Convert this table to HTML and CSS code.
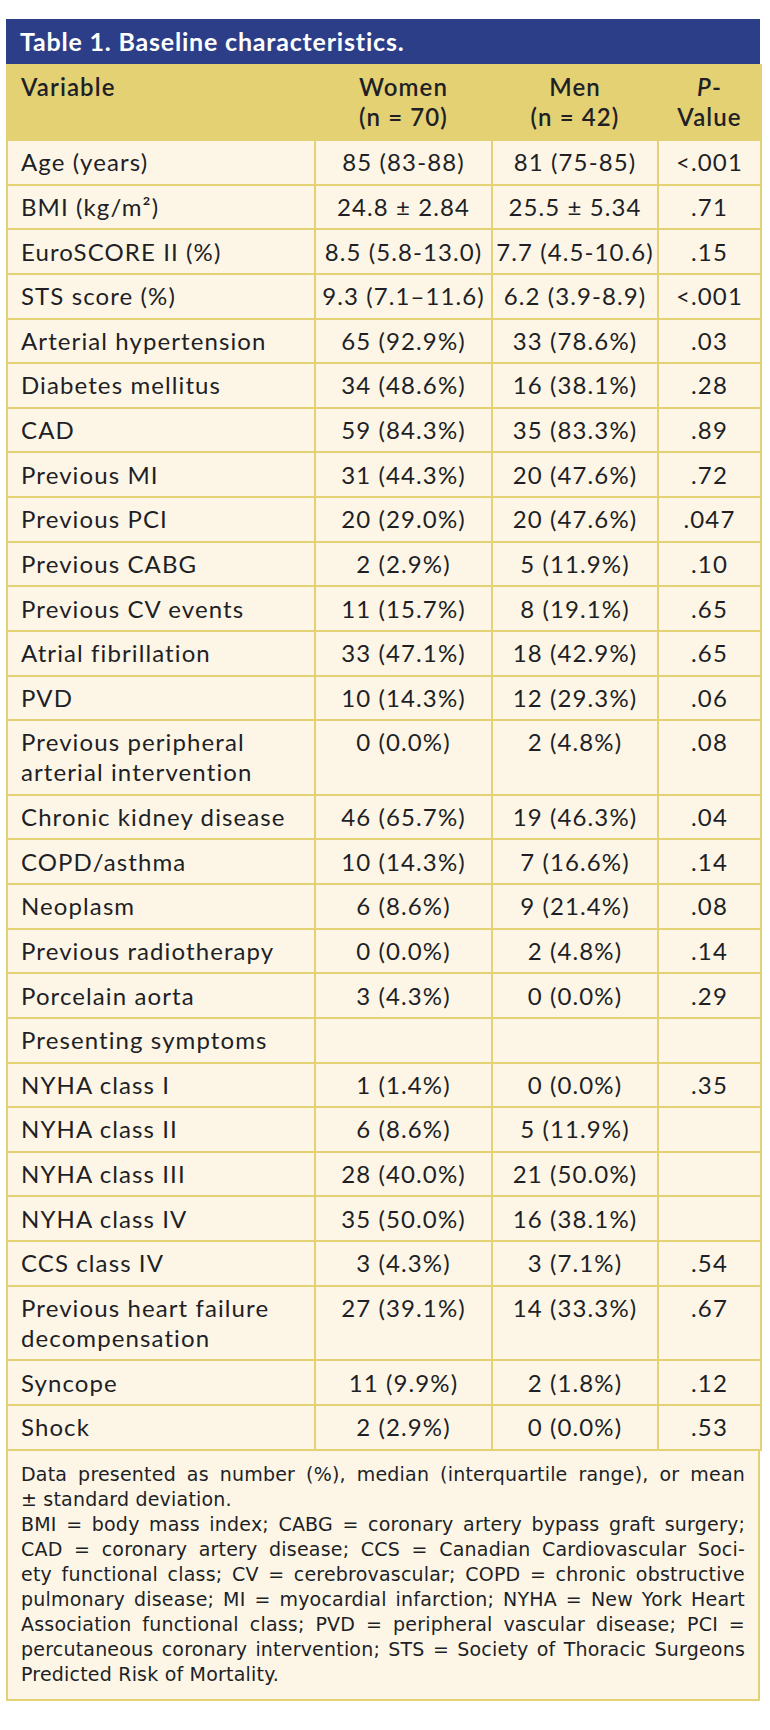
FILE: index.html
```html
<!DOCTYPE html>
<html>
<head>
<meta charset="utf-8">
<link rel="stylesheet" href="styles.css">
</head>
<body>
<div class="wrap">
  <div class="title">Table 1. Baseline characteristics.</div>
  <table class="tbl">
    <colgroup>
      <col class="c1"><col class="c2"><col class="c3"><col class="c4">
    </colgroup>
    <thead>
      <tr>
        <th class="var">Variable</th>
        <th>Women<br>(n = 70)</th>
        <th>Men<br>(n = 42)</th>
        <th><i>P</i>-<br>Value</th>
      </tr>
    </thead>
    <tbody>
      <tr><td>Age (years)</td><td>85 (83-88)</td><td>81 (75-85)</td><td>&lt;.001</td></tr>
      <tr><td>BMI (kg/m²)</td><td>24.8 ± 2.84</td><td>25.5 ± 5.34</td><td>.71</td></tr>
      <tr><td>EuroSCORE II (%)</td><td>8.5 (5.8-13.0)</td><td>7.7 (4.5-10.6)</td><td>.15</td></tr>
      <tr><td>STS score (%)</td><td>9.3 (7.1–11.6)</td><td>6.2 (3.9-8.9)</td><td>&lt;.001</td></tr>
      <tr><td>Arterial hypertension</td><td>65 (92.9%)</td><td>33 (78.6%)</td><td>.03</td></tr>
      <tr><td>Diabetes mellitus</td><td>34 (48.6%)</td><td>16 (38.1%)</td><td>.28</td></tr>
      <tr><td>CAD</td><td>59 (84.3%)</td><td>35 (83.3%)</td><td>.89</td></tr>
      <tr><td>Previous MI</td><td>31 (44.3%)</td><td>20 (47.6%)</td><td>.72</td></tr>
      <tr><td>Previous PCI</td><td>20 (29.0%)</td><td>20 (47.6%)</td><td>.047</td></tr>
      <tr><td>Previous CABG</td><td>2 (2.9%)</td><td>5 (11.9%)</td><td>.10</td></tr>
      <tr><td>Previous CV events</td><td>11 (15.7%)</td><td>8 (19.1%)</td><td>.65</td></tr>
      <tr><td>Atrial fibrillation</td><td>33 (47.1%)</td><td>18 (42.9%)</td><td>.65</td></tr>
      <tr><td>PVD</td><td>10 (14.3%)</td><td>12 (29.3%)</td><td>.06</td></tr>
      <tr><td>Previous peripheral<br>arterial intervention</td><td>0 (0.0%)</td><td>2 (4.8%)</td><td>.08</td></tr>
      <tr><td>Chronic kidney disease</td><td>46 (65.7%)</td><td>19 (46.3%)</td><td>.04</td></tr>
      <tr><td>COPD/asthma</td><td>10 (14.3%)</td><td>7 (16.6%)</td><td>.14</td></tr>
      <tr><td>Neoplasm</td><td>6 (8.6%)</td><td>9 (21.4%)</td><td>.08</td></tr>
      <tr><td>Previous radiotherapy</td><td>0 (0.0%)</td><td>2 (4.8%)</td><td>.14</td></tr>
      <tr><td>Porcelain aorta</td><td>3 (4.3%)</td><td>0 (0.0%)</td><td>.29</td></tr>
      <tr><td>Presenting symptoms</td><td></td><td></td><td></td></tr>
      <tr><td>NYHA class I</td><td>1 (1.4%)</td><td>0 (0.0%)</td><td>.35</td></tr>
      <tr><td>NYHA class II</td><td>6 (8.6%)</td><td>5 (11.9%)</td><td></td></tr>
      <tr><td>NYHA class III</td><td>28 (40.0%)</td><td>21 (50.0%)</td><td></td></tr>
      <tr><td>NYHA class IV</td><td>35 (50.0%)</td><td>16 (38.1%)</td><td></td></tr>
      <tr><td>CCS class IV</td><td>3 (4.3%)</td><td>3 (7.1%)</td><td>.54</td></tr>
      <tr><td>Previous heart failure<br>decompensation</td><td>27 (39.1%)</td><td>14 (33.3%)</td><td>.67</td></tr>
      <tr><td>Syncope</td><td>11 (9.9%)</td><td>2 (1.8%)</td><td>.12</td></tr>
      <tr><td>Shock</td><td>2 (2.9%)</td><td>0 (0.0%)</td><td>.53</td></tr>
    </tbody>
  </table>
  <div class="notes">
    <span class="ln jl">Data presented as number (%), median (interquartile range), or mean</span>
    <span class="ln">± standard deviation.</span>
    <span class="ln jl">BMI = body mass index; CABG = coronary artery bypass graft surgery;</span>
    <span class="ln jl">CAD = coronary artery disease; CCS = Canadian Cardiovascular Soci-</span>
    <span class="ln jl">ety functional class; CV = cerebrovascular; COPD = chronic obstructive</span>
    <span class="ln jl">pulmonary disease; MI = myocardial infarction; NYHA = New York Heart</span>
    <span class="ln jl">Association functional class; PVD = peripheral vascular disease; PCI =</span>
    <span class="ln jl">percutaneous coronary intervention; STS = Society of Thoracic Surgeons</span>
    <span class="ln">Predicted Risk of Mortality.</span>
  </div>
</div>
</body>
</html>
```
FILE: styles.css
```css
html, body {
  margin: 0;
  padding: 0;
  background: #ffffff;
}
.wrap {
  width: 754px;
  margin: 19px 0 0 6px;
  font-family: Lato, "Open Sans", sans-serif;
  color: #211f26;
}
.title {
  background: #2c3e88;
  color: #ffffff;
  font-weight: 700;
  font-size: 25px;
  letter-spacing: 0.8px;
  height: 45px;
  line-height: 45px;
  padding: 0 14px;
}
.tbl {
  width: 754px;
  border-collapse: collapse;
  table-layout: fixed;
  background: #fdf6e7;
  font-size: 24px;
  letter-spacing: 1.1px;
}
.c1 { width: 308px; }
.c2 { width: 177px; }
.c3 { width: 166px; }
.c4 { width: 103px; }
.tbl th, .tbl td {
  border: 2px solid #e4d174;
  line-height: 30px;
  vertical-align: top;
  text-align: center;
}
.tbl th {
  background: #e4d174;
  font-weight: 600;
  padding: 6px 2px 7px 2px;
}
.tbl th.var {
  text-align: left;
  padding-left: 13px;
}
.tbl td {
  padding: 6.32px 2px;
}
.tbl td:first-child {
  text-align: left;
  padding-left: 13px;
}
.notes {
  background: #fdf6e7;
  border: 2px solid #e4d174;
  border-top: 0;
  padding: 11px 13px 12px 13px;
  font-family: "DejaVu Sans", Verdana, sans-serif;
  font-size: 19px;
  letter-spacing: 0.2px;
  line-height: 25px;
}
.ln {
  display: block;
  white-space: nowrap;
}
.jl {
  text-align: justify;
  text-align-last: justify;
}
```
